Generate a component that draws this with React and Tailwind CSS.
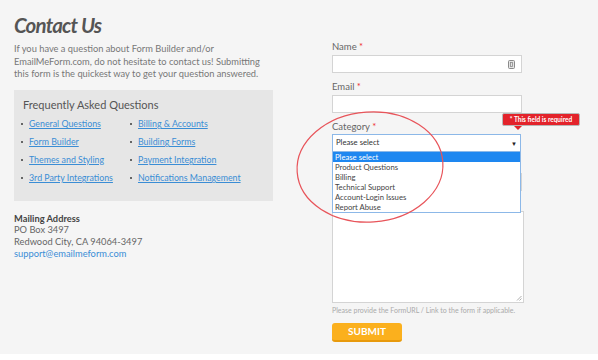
import React from 'react';

const FAQ_LEFT = ['General Questions', 'Form Builder', 'Themes and Styling', '3rd Party Integrations'];
const FAQ_RIGHT = ['Billing & Accounts', 'Building Forms', 'Payment Integration', 'Notifications Management'];
const OPTIONS = ['Please select', 'Product Questions', 'Billing', 'Technical Support', 'Account-Login Issues', 'Report Abuse'];

function FaqLink({ label }) {
  return (
    <li className="flex h-[18px] items-center">
      <span className="mr-[6px] h-[2px] w-[2px] bg-[#666]" />
      <a href="#" className="text-[8.8px] text-[#3a8dd5] underline underline-offset-[1px]">
        {label}
      </a>
    </li>
  );
}

function Label({ children, className = '' }) {
  return (
    <div className={`h-[12px] text-[9.5px] leading-[12px] text-[#666] ${className}`}>
      {children} <span className="text-[#e33]">*</span>
    </div>
  );
}

export default function App() {
  return (
    <div className="relative flex h-[360px] w-[598px] overflow-hidden bg-[#f5f5f5] font-['Lato',sans-serif]">
      {/* left column */}
      <div className="ml-[14px] w-[259px] pt-[11px]">
        <h1 className="text-[20.5px] font-bold italic leading-[28px] tracking-[-0.8px] text-[#555]">Contact Us</h1>
        <p className="mt-[4px] whitespace-nowrap text-[9.3px] leading-[12.5px] text-[#777]">
          If you have a question about Form Builder and/or
          <br />
          EmailMeForm.com, do not hesitate to contact us! Submitting
          <br />
          this form is the quickest way to get your question answered.
        </p>

        <div className="mt-[9px] bg-[#e6e6e6] pb-[14px] pt-[7px]">
          <h2 className="px-[9px] text-[11px] leading-[15px] text-[#555]">Frequently Asked Questions</h2>
          <div className="mt-[3px] flex pl-[7px]">
            <ul className="w-[109px]">
              {FAQ_LEFT.map((item) => (
                <FaqLink key={item} label={item} />
              ))}
            </ul>
            <ul>
              {FAQ_RIGHT.map((item) => (
                <FaqLink key={item} label={item} />
              ))}
            </ul>
          </div>
        </div>

        <div className="mt-[12px] text-[9.3px] leading-[11.7px] text-[#666]">
          <p className="font-bold text-[#444]">Mailing Address</p>
          <p>PO Box 3497</p>
          <p>Redwood City, CA 94064-3497</p>
          <a href="#" className="text-[#3a8dd5]">support@emailmeform.com</a>
        </div>
      </div>

      {/* right column */}
      <div className="ml-[59px] w-[192px] pt-[41px]">
        <Label>Name</Label>
        <div className="mt-[2px] flex h-[18px] w-[190px] items-center justify-end border border-[#d4d4d4] bg-white pr-[6px]">
          <svg width="7" height="9" viewBox="0 0 7 9">
            <rect x="0.5" y="0.5" width="6" height="8" rx="1" fill="#e4e4e4" stroke="#8a8a8a" />
            <rect x="2.5" y="2.5" width="2" height="4" fill="none" stroke="#8a8a8a" strokeWidth="0.8" />
          </svg>
        </div>

        <Label className="mt-[8px]">Email</Label>
        <div className="mt-[2px] h-[18px] w-[190px] border border-[#d4d4d4] bg-white" />

        <Label className="mt-[8px]">Category</Label>
        <div className="relative mt-[1px] w-[189px]">
          <div className="flex h-[18px] items-center justify-between border border-[#8cb8e8] bg-white pl-[3px] pr-[3px] text-[7.7px] text-[#333]">
            <span>Please select</span>
            <span className="text-[6px] text-[#222]">▼</span>
          </div>
          <ul className="absolute left-0 top-[18px] z-10 w-[189px] border border-t-0 border-[#8cb8e8] bg-white">
            {OPTIONS.map((opt, i) => (
              <li
                key={opt}
                className={
                  i === 0
                    ? 'h-[10px] bg-[#1e87f0] px-[2px] text-[7.7px] leading-[10px] text-white'
                    : 'h-[10px] px-[2px] text-[7.7px] leading-[10px] text-[#444]'
                }
              >
                {opt}
              </li>
            ))}
          </ul>
        </div>

        <div className="mt-[21px] h-[18px] w-[190px] border border-[#d4d4d4] bg-[#eee]" />
        <div className="relative mt-[20px] h-[92px] w-[192px] border border-[#d4d4d4] bg-white">
          <svg className="absolute bottom-[1px] right-[1px]" width="6" height="6" viewBox="0 0 6 6">
            <path d="M5.5 1 L1 5.5 M5.5 3.5 L3.5 5.5" stroke="#999" strokeWidth="0.8" />
          </svg>
        </div>
        <p className="mt-[3px] text-[7px] leading-[9px] text-[#aaa]">
          Please provide the FormURL / Link to the form if applicable.
        </p>
        <button
          type="button"
          className="mt-[8px] h-[19px] w-[70px] rounded-[3px] border-b-2 border-[#e89a0c] bg-[#fbb01d] text-[10px] font-bold leading-[17px] text-white"
        >
          SUBMIT
        </button>
      </div>

      {/* validation tooltip */}
      <div className="absolute left-[502px] top-[113px] z-20">
        <div className="flex h-[13px] w-[78px] items-center justify-center rounded-[2px] border border-[#b8b8b8] bg-[#e3232b] text-[6.5px] font-bold text-white">
          * This field is required
        </div>
        <div className="ml-[12px] h-0 w-0 border-l-[4px] border-r-[4px] border-t-[4px] border-l-transparent border-r-transparent border-t-[#e3232b]" />
      </div>

      {/* annotation circle */}
      <svg className="pointer-events-none absolute left-0 top-0 z-30" width="598" height="360">
        <ellipse cx="370" cy="167" rx="73" ry="55" transform="rotate(-4 370 167)" fill="none" stroke="#e8545a" strokeWidth="1.2" />
      </svg>

      <div className="absolute bottom-0 left-0 h-[6px] w-full bg-white" />
    </div>
  );
}
